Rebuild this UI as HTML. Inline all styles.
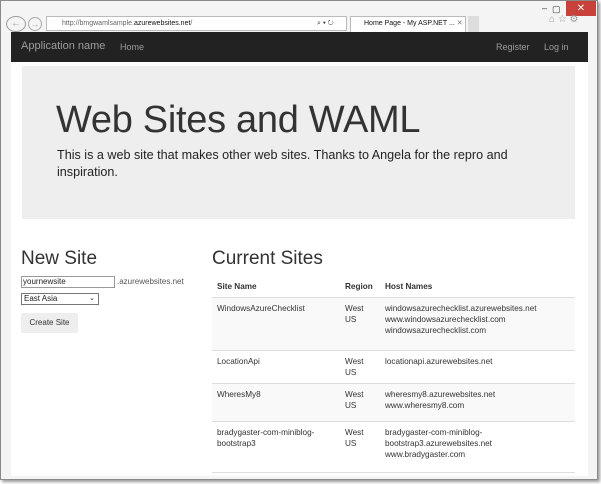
<!DOCTYPE html>
<html><head><style>
*{margin:0;padding:0;box-sizing:border-box}
body{width:601px;height:484px;overflow:hidden;background:#fff;font-family:"Liberation Sans",Arial,sans-serif;position:relative}
.a{position:absolute}
.frame{left:0;top:0;width:598px;height:480px;border:1px solid #8a8a8a;background:#f4f4f4;box-shadow:2px 2px 3px #999}
.nav{left:11px;top:32px;width:577px;height:30px;background:#222}
.nav span{position:absolute;color:#9d9d9d;font-size:9px;top:10px}
.content{left:11px;top:62px;width:577px;height:414px;background:#fff}
.jumbo{left:22px;top:66px;width:553px;height:153px;background:#eee}
td,th{font-size:8.2px;color:#333;text-align:left;vertical-align:top;line-height:11px}
</style></head><body>
<div class="a frame"></div>
<div class="a" style="left:566px;top:1px;width:30px;height:15px;background:#c9413b;color:#fff;font-size:10px;text-align:center;line-height:15px">✕</div>
<div class="a" style="left:552px;top:4px;font-size:9px;color:#333">▢</div>
<div class="a" style="left:542px;top:3px;font-size:9px;color:#333">–</div>
<div class="a" style="left:6px;top:16px;width:20px;height:16px;border:1px solid #999;border-radius:50%;font-size:10px;color:#999;text-align:center;line-height:14px">←</div>
<div class="a" style="left:28px;top:17px;width:14px;height:14px;border:1px solid #aaa;border-radius:50%;font-size:9px;color:#aaa;text-align:center;line-height:12px">→</div>
<div class="a" style="left:46px;top:16px;width:301px;height:15px;background:#fff;border:1px solid #bbb;font-size:7px;line-height:13px;color:#666;padding-left:15px">http://bmgwamlsample.<span style="color:#111">azurewebsites.net</span>/<span style="position:absolute;left:270px;color:#333">⌕ ▾ ↻</span></div>
<div class="a" style="left:350px;top:16px;width:116px;height:16px;background:#fff;border:1px solid #bbb;border-bottom:none;font-size:7px;line-height:14px;color:#111;padding-left:13px;white-space:nowrap">Home Page - My ASP.NET ... <span style="color:#777">✕</span></div>
<div class="a" style="left:468px;top:16px;width:11px;height:16px;background:#ddd"></div>
<div class="a" style="left:549px;top:14px;font-size:10px;color:#999">⌂ ☆ ⚙</div>
<div class="a nav"><span style="left:10px;top:8px;font-size:11px">Application name</span><span style="left:109px">Home</span><span style="left:485px">Register</span><span style="left:533px">Log in</span></div>
<div class="a content"></div>
<div class="a jumbo"></div>
<div class="a" style="left:56px;top:99px;font-size:38px;color:#333;letter-spacing:-0.3px">Web Sites and WAML</div>
<div class="a" style="left:57px;top:147px;width:460px;font-size:12.6px;line-height:17px;color:#222">This is a web site that makes other web sites. Thanks to Angela for the repro and inspiration.</div>
<div class="a" style="left:21px;top:248px;font-size:19px;color:#333">New Site</div>
<div class="a" style="left:212px;top:248px;font-size:19px;color:#333">Current Sites</div>
<div class="a" style="left:21px;top:276px;width:94px;height:12px;border:1px solid #999;font-size:8px;line-height:10px;padding-left:1px;color:#222">yournewsite</div>
<div class="a" style="left:117px;top:277px;font-size:8px;color:#555">.azurewebsites.net</div>
<div class="a" style="left:21px;top:293px;width:78px;height:12px;border:1px solid #777;font-size:8px;line-height:10px;padding-left:2px;color:#222">East Asia<span style="position:absolute;right:3px;font-size:7px">⌄</span></div>
<div class="a" style="left:21px;top:313px;width:57px;height:20px;background:#eee;border-radius:2px;font-size:8px;line-height:20px;text-align:center;color:#333">Create Site</div>
<table class="a" style="left:212px;top:276px;width:363px;border-collapse:collapse">
<tr style="height:20px"><th style="padding:5px 5px;font-weight:bold;width:133px">Site Name</th><th style="padding:5px 0;width:40px">Region</th><th style="padding:5px 0">Host Names</th></tr>
<tr style="background:#f9f9f9;border-top:1px solid #ddd;height:53px"><td style="padding:5px">WindowsAzureChecklist</td><td style="padding:5px 0">West<br>US</td><td style="padding:5px 0">windowsazurechecklist.azurewebsites.net<br>www.windowsazurechecklist.com<br>windowsazurechecklist.com</td></tr>
<tr style="border-top:1px solid #ddd;height:33px"><td style="padding:5px">LocationApi</td><td style="padding:5px 0">West<br>US</td><td style="padding:5px 0">locationapi.azurewebsites.net</td></tr>
<tr style="background:#f9f9f9;border-top:1px solid #ddd;height:38px"><td style="padding:5px">WheresMy8</td><td style="padding:5px 0">West<br>US</td><td style="padding:5px 0">wheresmy8.azurewebsites.net<br>www.wheresmy8.com</td></tr>
<tr style="border-top:1px solid #ddd;border-bottom:1px solid #ddd;height:51px"><td style="padding:5px">bradygaster-com-miniblog-<br>bootstrap3</td><td style="padding:5px 0">West<br>US</td><td style="padding:5px 0">bradygaster-com-miniblog-<br>bootstrap3.azurewebsites.net<br>www.bradygaster.com</td></tr>
</table>
</body></html>
